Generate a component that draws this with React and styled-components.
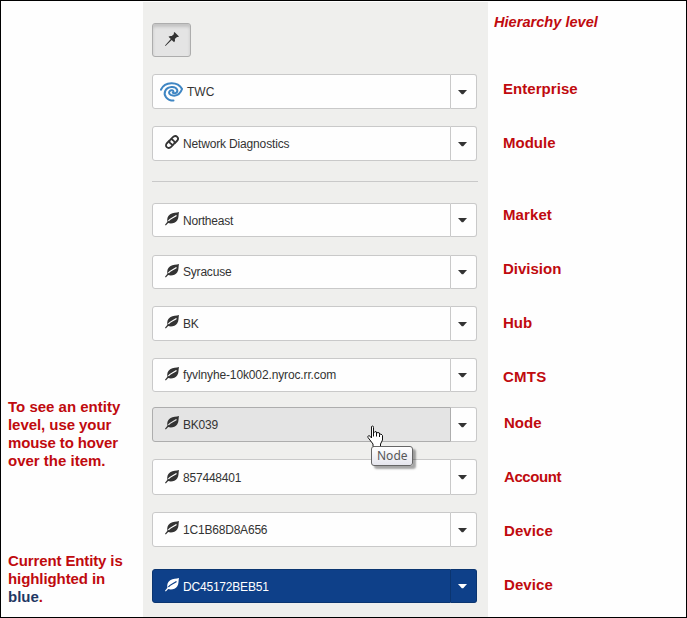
import React from "react";
import styled, { createGlobalStyle, css } from "styled-components";

const Global = createGlobalStyle`
  *, *::before, *::after { box-sizing: border-box; }
  body { margin: 0; background: #fefefe; font-family: "Liberation Sans", Arial, sans-serif; }
`;

const Page = styled.div`
  width: 687px;
  height: 618px;
  display: grid;
  grid-template-columns: 142px 345px 198px;
  border: 1px solid #000;
  background: #fefefe;
  overflow: hidden;
`;

const Notes = styled.aside`
  padding: 397px 0 0 7px;
`;

const Note = styled.p`
  margin: 0 0 ${(p) => p.$gap || 0}px;
  color: #c00a0e;
  font-size: 15px;
  font-weight: 700;
  line-height: 18px;
  white-space: nowrap;
`;

const Line = styled.span`
  display: block;
  letter-spacing: ${(p) => p.$track || 0}px;
`;

const Blue = styled.span`
  color: #1f3864;
`;

const Panel = styled.main`
  margin-top: 1px;
  padding: 21px 11px 0 9px;
  background: #efefed;
`;

const PinButton = styled.button`
  display: flex;
  width: 39px;
  height: 34px;
  margin: 0 0 17px;
  padding: 8px 0 0 12px;
  border: 1px solid #adadad;
  border-radius: 3px;
  background: #e4e4e4;
  box-shadow: inset 0 3px 3px rgba(0, 0, 0, 0.14);
  color: #333;
`;

const tones = {
  plain: css`
    --fill: #fefefe;
    --edge: #c9c9c9;
    color: #333;
  `,
  hover: css`
    --fill: #e4e4e4;
    --edge: #adadad;
    color: #333;
  `,
  current: css`
    --fill: #0e4089;
    --edge: #0b3570;
    color: #fff;
  `,
};

const SplitButton = styled.div`
  position: relative;
  display: flex;
  width: 325px;
  height: ${(p) => p.$height}px;
  margin-bottom: ${(p) => p.$gap}px;
  ${(p) => tones[p.$tone]}
`;

const Main = styled.button`
  display: flex;
  align-items: flex-start;
  width: 299px;
  padding: ${(p) => p.$inset}px 0 0 ${(p) => (p.$wide ? 7 : 12)}px;
  border: 1px solid var(--edge);
  border-radius: 3px 0 0 3px;
  background: var(--fill);
  color: inherit;
  font: 12px "Liberation Sans", Arial, sans-serif;
  text-align: left;
`;

const Caption = styled.span`
  margin: ${(p) => p.$top}px 0 0 ${(p) => p.$left}px;
  line-height: 14px;
  letter-spacing: ${(p) => p.$track}px;
  white-space: nowrap;
`;

const Toggle = styled.button`
  display: flex;
  align-items: center;
  width: 26px;
  padding: 1px 0 0 7px;
  border: 1px solid ${(p) => (p.$current ? "var(--edge)" : "#c9c9c9")};
  border-left: 0;
  border-radius: 0 3px 3px 0;
  background: ${(p) => (p.$current ? "var(--fill)" : "#fefefe")};
  color: inherit;
`;

const CaretIcon = () => (
  <svg width="9" height="5" viewBox="0 0 9 5">
    <path d="M0 0H9L5.200 4.300H3.800Z" fill="currentColor" />
  </svg>
);

const Rule = styled.hr`
  width: 326px;
  height: 1px;
  margin: 0 0 21px;
  border: 0;
  background: #c9c9c9;
`;

const Levels = styled.aside`
  padding: 12px 0 0 15px;
  color: #c00a0e;
  font-size: 15px;
  font-weight: 700;
  line-height: 18px;
`;

const Heading = styled.div`
  margin: 0 0 49px -9px;
  font-size: 14.6px;
  font-style: italic;
`;

const Level = styled.div`
  margin: 0 0 ${(p) => p.$gap}px ${(p) => p.$left || 0}px;
  letter-spacing: ${(p) => p.$track || 0}px;
`;

const Tooltip = styled.div`
  position: absolute;
  left: 219px;
  top: 39px;
  z-index: 2;
  width: 42px;
  height: 20px;
  padding: 1px 0 0 5px;
  border: 1px solid #666;
  border-radius: 3px;
  background: linear-gradient(#fff, #e6e6ee);
  box-shadow: 3px 3px 2px rgba(0, 0, 0, 0.35);
  color: #575757;
  font: 12px/16px "Noto Sans", sans-serif;
`;

const Pointer = styled.svg`
  position: absolute;
  left: 215px;
  top: 18px;
  z-index: 1;
`;

const LeafIcon = () => (
  <svg width="14" height="14" viewBox="0 0 14 14">
    <path d="M14 0C11.500 .9 8 .6 5.200 2.300C2.600 4 1.800 6.800 2.400 9.700L0 12.700L.8 13.500L3.200 11.100C6 12 10.300 11.400 12.300 8.300C14 5.500 13.300 2.700 14 0Z" fill="currentColor" />
    <path d="M3.400 9C5.200 6.200 8.300 6 11.500 3.500" fill="none" stroke="var(--fill)" strokeWidth="1.300" />
  </svg>
);

const LinkIcon = () => (
  <svg width="14" height="14" viewBox="0 0 14 14" fill="none" stroke="currentColor" strokeWidth="1.800">
    <path d="M9.400 8.500L11.900 6C13.400 4.500 13.300 2.900 12.200 1.800C11.100 .7 9.300 .7 7.900 2.100L5.400 4.600C3.900 6.100 4.300 7.300 5.300 8.200L7.700 9.900" />
    <path d="M4.600 5.500L2.100 8C.6 9.500 .7 11.100 1.800 12.200C2.900 13.300 4.700 13.300 6.100 11.900L8.600 9.400C10.100 7.900 9.700 6.700 8.700 5.800L6.300 4.100" />
  </svg>
);

const PinIcon = () => (
  <svg width="14" height="14" viewBox="0 0 14 14" fill="currentColor">
    <path d="M9.500 0L14 4.400L13 5.100L12 4.900L9.800 7.100C10.300 8.300 10 9.400 9.100 10.300L6.700 7.900L.5 14L0 13.500L5.800 7.100L3.500 4.800C4.500 3.900 5.600 3.700 6.800 4.100L9 2L8.700 1Z" />
  </svg>
);

const SwirlLogo = () => (
  <svg width="23" height="20" viewBox="0 0 23 20" fill="none" stroke="#3f86c3" strokeLinecap="round">
    <path d="M.9 7.700C5 -.6 17.500 -.8 22.100 6.900C20.500 11.500 17 14.100 13 13.600C9.300 13.100 8.200 10.700 9.900 8.900C11.200 7.700 13.300 8.200 13.500 9.700" strokeWidth="2" />
    <path d="M13.500 18.600C7 18.500 3 13.300 5.300 8.700C7.500 4.200 15.500 3.500 17.200 7.800C18.100 10.700 14.700 12 12.700 10.700" strokeWidth="2" />
  </svg>
);

const icons = { leaf: LeafIcon, link: LinkIcon, logo: SwirlLogo };

function Entity({ text, icon = "leaf", tone = "plain", height = 34, gap, inset = 8, top = 2, left = 4, track = -0.2, children }) {
  const Icon = icons[icon];
  return (
    <SplitButton $height={height} $gap={gap} $tone={tone}>
      <Main $wide={icon === "logo"} $inset={inset}>
        <Icon />
        <Caption $top={top} $left={left} $track={track}>{text}</Caption>
      </Main>
      <Toggle $current={tone === "current"}><CaretIcon /></Toggle>
      {children}
    </SplitButton>
  );
}

const HandPointer = () => (
  <Pointer width="18" height="23" viewBox="0 0 18 23">
    <path d="M4.500 1.500C5.500 .5 6.500 1 6.500 2.500V8L8 6.500L9.500 7V8L11 7.500L12.500 8V9.500L14 9L15.500 10.500V15L13.500 19V21.500H6V19L1 12.500C.3 11 2 10 3 11.200L4.500 13Z" fill="#fff" stroke="#111" />
    <path d="M6.500 8V11.500M9.500 8V11.500M12.500 9.500V12" stroke="#111" fill="none" />
  </Pointer>
);

export default function App() {
  return (
    <>
      <Global />
      <Page>
        <Notes>
          <Note $gap={82}>
            <Line>To see an entity</Line>
            <Line $track={-0.06}>level, use your</Line>
            <Line $track={-0.12}>mouse to hover</Line>
            <Line>over the item.</Line>
          </Note>
          <Note>
            <Line $track={-0.12}>Current Entity is</Line>
            <Line $track={-0.08}>highlighted in</Line>
            <Line><Blue>blue</Blue>.</Line>
          </Note>
        </Notes>
        <Panel>
          <PinButton><PinIcon /></PinButton>
          <Entity text="TWC" icon="logo" height={35} gap={17} inset={7} top={3} track={0} />
          <Entity text="Network Diagnostics" icon="link" height={35} gap={20} track={-0.16} />
          <Rule />
          <Entity text="Northeast" gap={18} />
          <Entity text="Syracuse" gap={17} top={1} />
          <Entity text="BK" height={35} gap={17} />
          <Entity text="fyvlnyhe-10k002.nyroc.rr.com" gap={15} top={1} track={-0.13} />
          <Entity text="BK039" tone="hover" height={35} gap={17}>
            <HandPointer />
            <Tooltip>Node</Tooltip>
          </Entity>
          <Entity text="857448401" height={36} gap={17} inset={10} top={1} />
          <Entity text="1C1B68D8A656" height={35} gap={22} />
          <Entity text="DC45172BEB51" tone="current" gap={0} />
        </Panel>
        <Levels>
          <Heading>Hierarchy level</Heading>
          <Level $gap={36} $track={0.05}>Enterprise</Level>
          <Level $gap={54}>Module</Level>
          <Level $gap={36} $track={0.1}>Market</Level>
          <Level $gap={36}>Division</Level>
          <Level $gap={36}>Hub</Level>
          <Level $gap={28} $track={0.25}>CMTS</Level>
          <Level $gap={36} $left={1}>Node</Level>
          <Level $gap={36} $left={1} $track={-0.4}>Account</Level>
          <Level $gap={36} $left={1} $track={0.1}>Device</Level>
          <Level $gap={0} $left={1} $track={0.1}>Device</Level>
        </Levels>
      </Page>
    </>
  );
}
